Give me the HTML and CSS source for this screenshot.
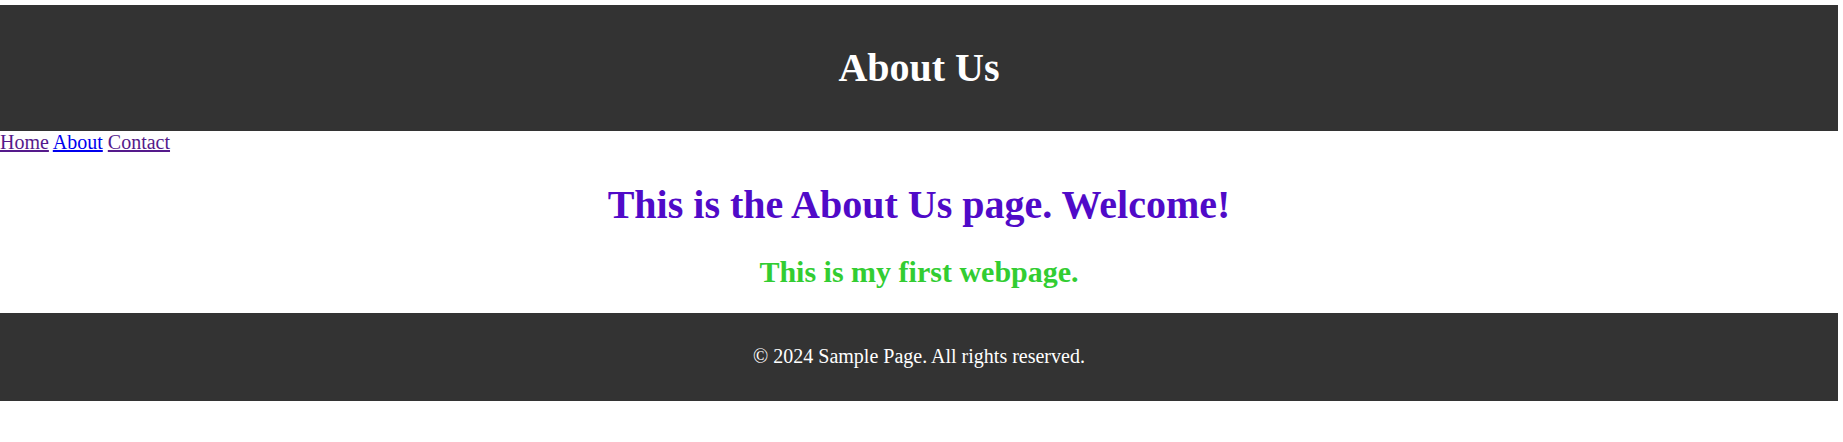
FILE: index.html
```html
<!DOCTYPE html>
<html lang="en">
<head>
<meta charset="utf-8">
<title>About Us</title>
<link rel="stylesheet" href="styles.css">
</head>
<body>
<header class="site-header">
  <h1 class="site-title">About Us</h1>
</header>
<nav class="site-nav">
  <a href="#" class="nav-link visited">Home</a>
  <a href="#" class="nav-link">About</a>
  <a href="#" class="nav-link visited">Contact</a>
</nav>
<main class="content">
  <h1 class="welcome">This is the About Us page. Welcome!</h1>
  <h2 class="subtitle">This is my first webpage.</h2>
</main>
<footer class="site-footer">
  <p class="footer-text">© 2024 Sample Page. All rights reserved.</p>
</footer>
</body>
</html>
```

FILE: styles.css
```css
html, body {
  margin: 0;
  padding: 0;
  background: #ffffff;
}

body {
  padding: 5px 5px 0 0;
  font-family: "Liberation Serif", "Times New Roman", serif;
  font-size: 20px;
  color: #000000;
}

.site-header {
  background: #333333;
  color: #ffffff;
  text-align: center;
  padding: 12.5px 0 13px;
}

.site-title {
  margin: 26.8px 0;
  font-size: 40px;
  font-weight: bold;
}

.site-nav {
  font-size: 20px;
}

.nav-link {
  color: #0000ee;
  text-decoration: underline;
}

.nav-link.visited {
  color: #551a8b;
}

.content {
  text-align: center;
}

.welcome {
  margin: 26.8px 0;
  font-size: 40px;
  font-weight: bold;
  color: #500ac8;
}

.subtitle {
  margin: 24px 0 24px;
  font-size: 30px;
  font-weight: bold;
  color: #32cd32;
}

.site-footer {
  background: #333333;
  color: #ffffff;
  text-align: center;
  padding: 12.5px 0;
}

.footer-text {
  margin: 20px 0;
  font-size: 20px;
}
```
